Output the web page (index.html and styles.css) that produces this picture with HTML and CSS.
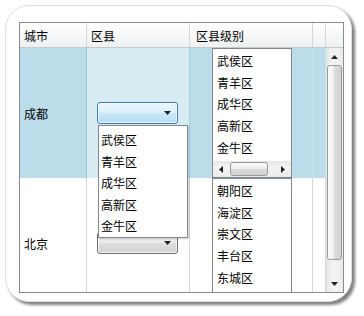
FILE: index.html
```html
<!DOCTYPE html>
<html>
<head>
<meta charset="utf-8">
<link rel="stylesheet" href="styles.css">
</head>
<body>
<div class="card">
  <div class="grid">
    <div class="hc">城市</div>
    <div class="hc">区县</div>
    <div class="hc hc3">区县级别</div>
    <div class="hc"></div>
    <div class="hc last"></div>

    <div class="cell sel c1">成都</div>
    <div class="cell cur c2">
      <div class="combo open">
        <svg class="arr" width="7" height="4" viewBox="0 0 7 4"><path d="M0 0H7L3.5 4Z" fill="#222"/></svg>
        <div class="popup">
          <div class="pi">武侯区</div>
          <div class="pi">青羊区</div>
          <div class="pi">成华区</div>
          <div class="pi">高新区</div>
          <div class="pi">金牛区</div>
        </div>
      </div>
    </div>
    <div class="cell sel c3">
      <div class="lb">
        <div class="items">
          <div class="li">武侯区</div>
          <div class="li">青羊区</div>
          <div class="li">成华区</div>
          <div class="li">高新区</div>
          <div class="li">金牛区</div>
        </div>
        <div class="hscroll">
          <div class="hbtn"><svg width="4" height="7" viewBox="0 0 4 7"><path d="M4 0V7L0 3.5Z" fill="#222"/></svg></div>
          <div class="htrack"><div class="hthumb"></div></div>
          <div class="hbtn"><svg width="4" height="7" viewBox="0 0 4 7"><path d="M0 0V7L4 3.5Z" fill="#222"/></svg></div>
        </div>
      </div>
    </div>
    <div class="cell sel c4"></div>

    <div class="vscroll">
      <div class="vbtn"><svg width="7" height="4" viewBox="0 0 7 4"><path d="M0 4H7L3.5 0Z" fill="#222"/></svg></div>
      <div class="vthumb"></div>
      <div class="vtrack"></div>
      <div class="vbtn"><svg width="7" height="4" viewBox="0 0 7 4"><path d="M0 0H7L3.5 4Z" fill="#222"/></svg></div>
    </div>

    <div class="cell c1">北京</div>
    <div class="cell c2">
      <div class="combo">
        <svg class="arr" width="7" height="4" viewBox="0 0 7 4"><path d="M0 0H7L3.5 4Z" fill="#222"/></svg>
      </div>
    </div>
    <div class="cell c3">
      <div class="lb">
        <div class="items">
          <div class="li">朝阳区</div>
          <div class="li">海淀区</div>
          <div class="li">崇文区</div>
          <div class="li">丰台区</div>
          <div class="li">东城区</div>
        </div>
      </div>
    </div>
    <div class="cell c4"></div>
  </div>
</div>
</body>
</html>
```

FILE: styles.css
```css
* { box-sizing: border-box; }
html, body { margin: 0; padding: 0; background: #fff; }
body {
  font-family: "Noto Sans CJK SC", sans-serif;
  font-size: 12px;
  color: #000;
  width: 364px;
  height: 316px;
  overflow: hidden;
}
.card {
  margin: 5px 0 0 5px;
  width: 347px;
  height: 297px;
  border: 1px solid #dedede;
  border-radius: 24px;
  box-shadow: 3px 3px 3px rgba(0,0,0,0.5);
  padding: 16px 0 0 13px;
  background: #fff;
}
.grid {
  width: 325px;
  height: 271px;
  border: 1px solid #888b92;
  display: grid;
  grid-template-columns: 67px 103px 123px 13px 17px;
  grid-template-rows: 25px 130px 130px;
  overflow: hidden;
  position: relative;
}
.hc {
  border-right: 1px solid #d5d5d5;
  border-bottom: 1px solid #c8c8c8;
  background: linear-gradient(#ffffff, #eef0f2);
  display: flex;
  align-items: center;
  padding-left: 4px;
}
.hc3 { padding-left: 6px; }
.hc.last { border-right: none; }
.cell {
  border-right: 1px solid #d6d6d6;
  display: flex;
  align-items: center;
  background: #fff;
}
.c1 { padding-left: 4px; }
.c2 { padding-left: 10px; }
.c3 { padding-left: 22px; align-items: stretch; }
.sel { background: #badde9; }
.sel.c1 { border-right-color: #94c7da; }
.cur { background: #d7ecf3; border-right: 1px solid #a9d3e1; }
.sel.c3 { border-right-color: #c4e2ec; }
.sel.c4 { border-right-color: #c4e2ec; }

.combo {
  position: relative;
  width: 81px;
  height: 22px;
  border: 1px solid #707070;
  border-radius: 3px;
  background: linear-gradient(#f4f4f4, #ebebeb 50%, #dfdfdf 50%, #d3d3d3);
  box-shadow: inset 0 0 0 1px rgba(255,255,255,0.7);
  display: flex;
  align-items: center;
  justify-content: flex-end;
  padding-right: 6px;
}
.combo.open {
  border-color: #3d7bad;
  background: linear-gradient(#eaf6fd, #dcf0fb 50%, #c9e7f8 50%, #b6ddf3);
}
.arr { display: block; }
.popup {
  position: absolute;
  left: 0;
  top: 22px;
  width: 90px;
  z-index: 5;
  background: #fff;
  border: 1px solid #828790;
  padding-top: 3px;
  box-shadow: 1px 1px 2px rgba(0,0,0,0.2);
}
.pi {
  height: 21.6px;
  line-height: 21.6px;
  padding-left: 2px;
}
.lb {
  width: 80px;
  height: 130px;
  border: 1px solid #828790;
  background: #fff;
  display: flex;
  flex-direction: column;
}
.items { flex: 1; padding-top: 1px; overflow: hidden; }
.li {
  height: 21.7px;
  line-height: 21.7px;
  padding-left: 4px;
}
.hscroll {
  height: 16px;
  display: flex;
  background: linear-gradient(#e6e6e6, #f3f3f3 40%, #eaeaea);
}
.hbtn {
  width: 16px;
  display: flex;
  align-items: center;
  justify-content: center;
}
.htrack { flex: 1; padding: 1px 1px 1px 1px; }
.hthumb {
  width: 38px;
  height: 14px;
  border: 1px solid #9a9a9a;
  border-radius: 3px;
  background: linear-gradient(#fbfbfb, #ececec 50%, #dadada 50%, #d2d2d2);
}
.vscroll {
  grid-column: 5;
  grid-row: 2 / span 2;
  height: 244px;
  display: flex;
  flex-direction: column;
  background: linear-gradient(90deg, #e4e4e4, #f4f4f4 40%, #ececec);
}
.vbtn {
  height: 17px;
  display: flex;
  align-items: center;
  justify-content: center;
}
.vthumb {
  margin: 0 1px;
  height: 195px;
  border: 1px solid #9a9a9a;
  border-radius: 3px;
  background: linear-gradient(90deg, #fbfbfb, #ececec 50%, #dadada 50%, #d2d2d2);
}
.vtrack { flex: 1; }
```
